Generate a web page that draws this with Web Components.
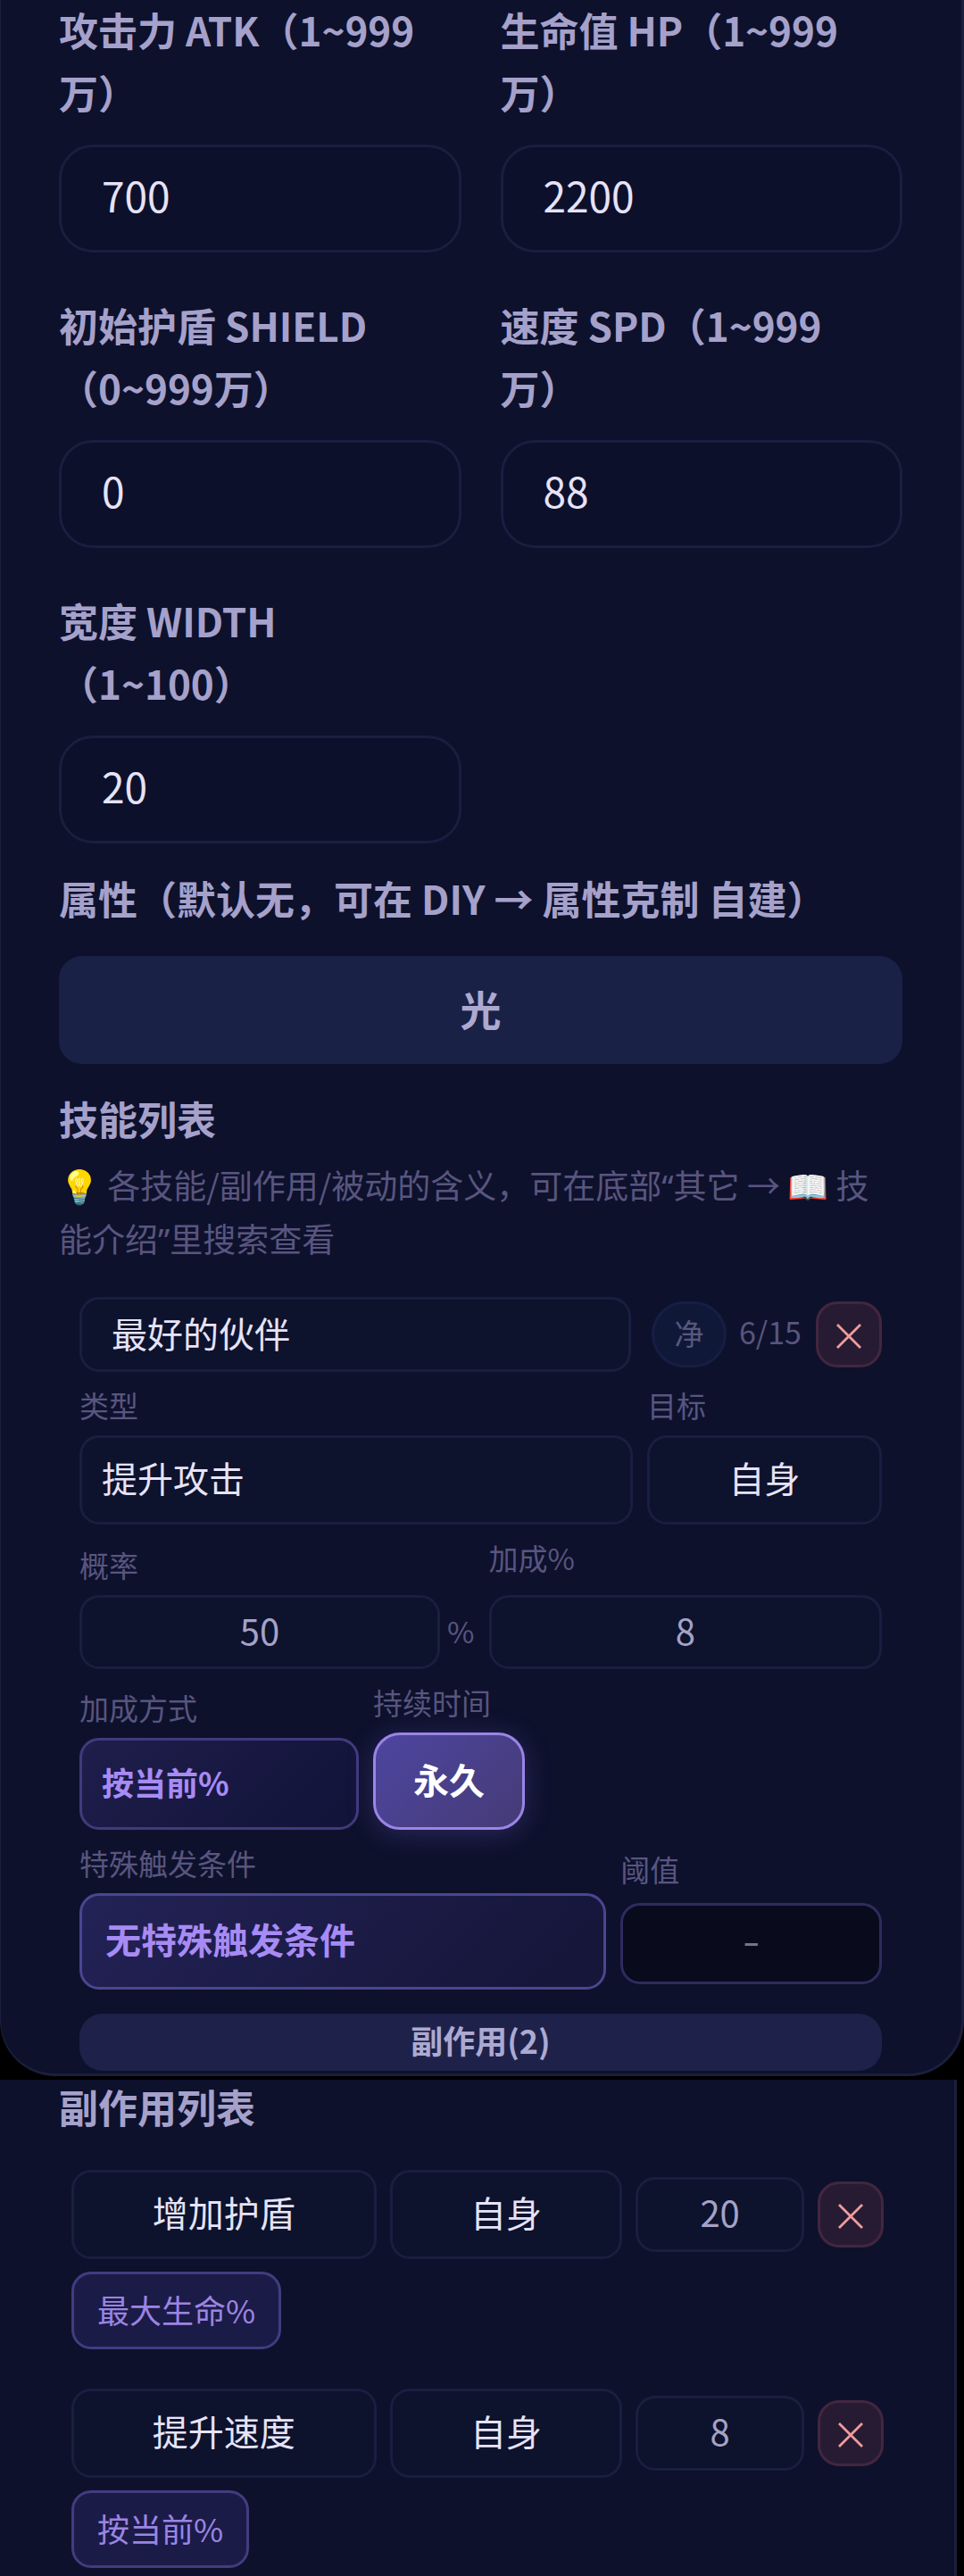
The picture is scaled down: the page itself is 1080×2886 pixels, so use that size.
<!DOCTYPE html>
<html lang="zh-CN">
<head>
<meta charset="utf-8">
<meta name="viewport" content="width=device-width, initial-scale=1">
<title>角色编辑</title>
<style>
  :root {
    --bg: #0d112c;
    --line: #1a1e3f;
    --label: #a5a1ca;
    --muted: #59557f;
    --value: #e6e3f7;
    --soft: #a5a2c6;
    --violet: #a78bf5;
  }
  html, body { margin: 0; background: #000; }
  body {
    font-family: "Noto Sans CJK SC", "Noto Sans", sans-serif;
    color: var(--label);
    overflow-x: hidden;
  }
</style>
</head>
<body>
<role-editor></role-editor>

<script>
const base = `
  *, *::before { box-sizing: border-box; }
  button, input, select { font: inherit; color: inherit; margin: 0; outline: none; }
  input, select { appearance: none; -webkit-appearance: none; }
  button { cursor: pointer; padding: 0; }
`;

class Base extends HTMLElement {
  connectedCallback() {
    if (this.shadowRoot) return;
    this.attachShadow({ mode: "open" });
    this.shadowRoot.innerHTML = `<style>${base}${this.styles()}</style>${this.view()}`;
  }
  attr(name, fallback = "") { return this.getAttribute(name) ?? fallback; }
}

/* Rounded surface holding one part of the editor */
customElements.define("editor-panel", class extends Base {
  styles() { return `
    :host {
      display: flow-root; box-sizing: border-box; background: var(--bg);
      border: 3px solid #1c1f3c; border-top: 0; border-left-width: 1px;
      border-radius: 0 0 62px 62px;
      padding: 0 66px 3px 65px;
    }
    :host([continued]) {
      margin: 4px 8px 0 0; border-radius: 0; border-bottom: 0; border-left: 0;
      padding: 0 79px 10px 66px;
    }`; }
  view() { return `<slot></slot>`; }
});

/* Large labelled number box */
customElements.define("stat-field", class extends Base {
  styles() { return `
    :host { display: flex; flex-direction: column; gap: 24px; min-width: 0; }
    label { font-size: 44px; line-height: 70px; font-weight: 600; }
    input {
      width: 100%; height: 121px; padding: 0 45px 10px; border-radius: 38px;
      border: 3px solid var(--line); background: #0c102b;
      color: var(--value); font-size: 46px;
    }`; }
  view() { return `
    <label for="v"><slot></slot></label>
    <input id="v" inputmode="numeric" value="${this.attr("value")}">`; }
});

customElements.define("section-title", class extends Base {
  styles() { return `
    :host { display: block; font-size: 44px; line-height: 70px; font-weight: 600; }
    :host([compact]) { line-height: 60px; }
    h2 { margin: 0; font: inherit; }`; }
  view() { return `<h2><slot></slot></h2>`; }
});

/* Small caption above its control */
customElements.define("mini-field", class extends Base {
  styles() { return `
    :host { display: flex; flex-direction: column; gap: var(--field-gap, 16px); min-width: 0; }
    label { color: var(--muted); font-size: 33px; line-height: 36px; white-space: nowrap; }
    .row { display: flex; align-items: center; gap: 8px; }
    .unit { color: var(--muted); font-size: 33px; line-height: 36px; padding-bottom: 4px; }
    input, select, button {
      flex: 1; width: 100%; min-width: 0; border: 3px solid var(--line); border-radius: 22px;
      background: #0d122d; color: var(--value); font-size: 40px; text-align: center;
    }
    select { height: 100px; text-align-last: center; padding: 0 16px 6px; }
    input { height: 83px; color: var(--soft); padding: 0 12px 6px; }
    :host([start]) select { text-align: left; text-align-last: left; padding: 0 22px 6px; }
    :host([accent]) select {
      height: 103px; color: var(--violet); font-size: 36px; font-weight: 600;
      border-color: #3f3b7c;
      background: linear-gradient(135deg, #1f1e4c, #12143a 90%);
    }
    :host([accent="large"]) select {
      height: 108px; font-size: 40px; padding: 0 26px 6px; border-color: #4b4690;
      background: linear-gradient(135deg, #232256, #15163a 90%);
    }
    :host([dark]) input { height: 91px; background: #090a1b; border-color: #2f2b5e; font-size: 32px; font-weight: 700; }
    :host([dark]) input::placeholder { color: #77767f; opacity: 1; }
    button {
      height: 109px; padding-bottom: 6px; border-color: #9b84e6; border-radius: 30px; color: #fff;
      font-weight: 700; background: linear-gradient(135deg, #4d45a0, #463b76);
      box-shadow: 0 4px 30px #6d56c655;
    }`; }
  view() {
    const kind = this.attr("kind", "select"), value = this.attr("value");
    const control = kind === "input"
      ? `<input id="c" inputmode="numeric" value="${value}" placeholder="${this.attr("placeholder")}">`
      : kind === "toggle"
        ? `<button id="c" type="button" aria-pressed="true">${value}</button>`
        : `<select id="c"><option>${value}</option></select>`;
    const unit = this.attr("unit");
    return `<label for="c">${this.attr("label")}</label>
      <div class="row">${control}${unit ? `<span class="unit">${unit}</span>` : ""}</div>`;
  }
});

customElements.define("remove-button", class extends Base {
  styles() { return `
    :host { display: block; flex: none; }
    button {
      display: flex; align-items: center; justify-content: center;
      width: 74px; height: 74px; padding-top: 4px; border: 3px solid #43263f; border-radius: 24px; background: #271b33;
    }
    svg { display: block; width: 28px; height: 28px; }`; }
  view() { return `<button type="button" aria-label="删除">
    <svg viewBox="0 0 28 28" fill="none" stroke="#f09c9c" stroke-width="2.8"><path d="M1 1 27 27M27 1 1 27"/></svg>
  </button>`; }
});

customElements.define("wide-button", class extends Base {
  styles() { return `
    :host { display: block; }
    button {
      display: block; width: 100%; height: 121px; padding-bottom: 6px; border: 0; border-radius: 26px;
      background: #1a2147; color: #aca9d1; font-size: 46px; font-weight: 600;
    }
    :host([slim]) button { height: 64px; background: #1e224a; font-size: 36px; line-height: 58px; }`; }
  view() { return `<button type="button"><slot></slot></button>`; }
});

customElements.define("skill-card", class extends Base {
  styles() { return `
    :host { display: flex; flex-direction: column; gap: 19px; padding: 0 23px; }
    .head { display: flex; align-items: center; }
    .name {
      flex: 1; min-width: 0; height: 84px; border: 3px solid var(--line); border-radius: 22px;
      background: #0d122d; color: var(--value); font-size: 40px; padding: 0 33px 4px;
    }
    .badge {
      width: 84px; height: 74px; margin: 0 14px 0 23px; padding-bottom: 4px;
      border: 3px solid #171e44; border-radius: 42px;
      background: #101838; color: #58587d; font-size: 33px;
    }
    .count { color: var(--muted); font-size: 34px; line-height: 40px; width: 86px; padding-bottom: 6px; }
    .row { display: flex; gap: 16px; align-items: flex-end; }
    .row.mid { align-items: center; }
    .type { flex: 620; } .target { flex: 263; }
    .rate { flex: 443; } .bonus { flex: 441; --field-gap: 24px; }
    .mode { width: 313px; } .time { width: 170px; }
    .cond { flex: 591; } .limit { flex: 293; --field-gap: 20px; }
    wide-button { margin-top: 8px; }`; }
  view() { return `
    <div class="head">
      <input class="name" aria-label="技能名称" value="最好的伙伴">
      <button class="badge" type="button">净</button>
      <span class="count">6/15</span>
      <remove-button></remove-button>
    </div>
    <div class="row">
      <mini-field class="type" start label="类型" value="提升攻击"></mini-field>
      <mini-field class="target" label="目标" value="自身"></mini-field>
    </div>
    <div class="row">
      <mini-field class="rate" kind="input" label="概率" value="50" unit="%"></mini-field>
      <mini-field class="bonus" kind="input" label="加成%" value="8"></mini-field>
    </div>
    <div class="row">
      <mini-field class="mode" start accent label="加成方式" value="按当前%"></mini-field>
      <mini-field class="time" kind="toggle" label="持续时间" value="永久"></mini-field>
    </div>
    <div class="row mid">
      <mini-field class="cond" start accent="large" label="特殊触发条件" value="无特殊触发条件"></mini-field>
      <mini-field class="limit" kind="input" dark label="阈值" placeholder="–"></mini-field>
    </div>
    <wide-button slim>副作用(2)</wide-button>`; }
});

customElements.define("effect-row", class extends Base {
  styles() { return `
    :host { display: flex; flex-direction: column; align-items: flex-start; gap: 14px; padding-left: 14px; }
    .row {
      display: grid; grid-template-columns: 342fr 261fr 189fr auto;
      align-items: center; gap: 15px; width: 100%;
    }
    select, input {
      width: 100%; min-width: 0; border: 3px solid var(--line); border-radius: 22px; background: #0d122d;
      color: var(--value); font-size: 40px; text-align: center; text-align-last: center; padding: 0 12px 6px;
    }
    select { height: 100px; }
    input { height: 84px; color: var(--soft); }
    .chip {
      height: 87px; padding: 0 26px 4px; border: 3px solid #413d80; border-radius: 22px;
      background: #1b1b47; color: #9b84e2; font-size: 36px;
    }`; }
  view() { return `
    <div class="row">
      <select aria-label="副作用"><option>${this.attr("kind")}</option></select>
      <select aria-label="目标"><option>${this.attr("target")}</option></select>
      <input inputmode="numeric" aria-label="数值" value="${this.attr("value")}">
      <remove-button></remove-button>
    </div>
    <button class="chip" type="button">${this.attr("mode")}</button>`; }
});

customElements.define("role-editor", class extends Base {
  styles() { return `
    :host { display: block; }
    .stats {
      display: grid; grid-template-columns: 1fr 1fr; column-gap: 44px; row-gap: 46px;
      margin-top: -2px;
    }
    .title { padding: 26px 0 30px; }
    .list { padding: 26px 0 10px; }
    .tip { margin: 0 0 35px; color: var(--muted); font-size: 37px; line-height: 59px; }
    .quote { font-family: "Noto Sans", sans-serif; }
    .effects { display: flex; flex-direction: column; gap: 44px; margin-top: 41px; }
    .nb { white-space: nowrap; }`; }
  view() { return `
    <editor-panel>
      <div class="stats">
        <stat-field value="700">攻击力 ATK（1~999<br>万）</stat-field>
        <stat-field value="2200">生命值 HP（1~999<br>万）</stat-field>
        <stat-field value="0">初始护盾 SHIELD<span class="nb">（0~999万）</span></stat-field>
        <stat-field value="88">速度 SPD（1~999<br>万）</stat-field>
        <stat-field value="20">宽度 WIDTH<br><span class="nb">（1~100）</span></stat-field>
      </div>
      <section-title class="title">属性（默认无，可在 DIY → 属性克制 自建）</section-title>
      <wide-button>光</wide-button>
      <section-title class="list">技能列表</section-title>
      <p class="tip">💡 各技能/副作用/被动的含义，可在底部<span class="quote">“</span>其它 → 📖 技<br>能介绍<span class="quote">”</span>里搜索查看</p>
      <skill-card></skill-card>
    </editor-panel>
    <editor-panel continued>
      <section-title compact>副作用列表</section-title>
      <div class="effects">
        <effect-row kind="增加护盾" target="自身" value="20" mode="最大生命%"></effect-row>
        <effect-row kind="提升速度" target="自身" value="8" mode="按当前%"></effect-row>
      </div>
    </editor-panel>`; }
});
</script>
</body>
</html>
